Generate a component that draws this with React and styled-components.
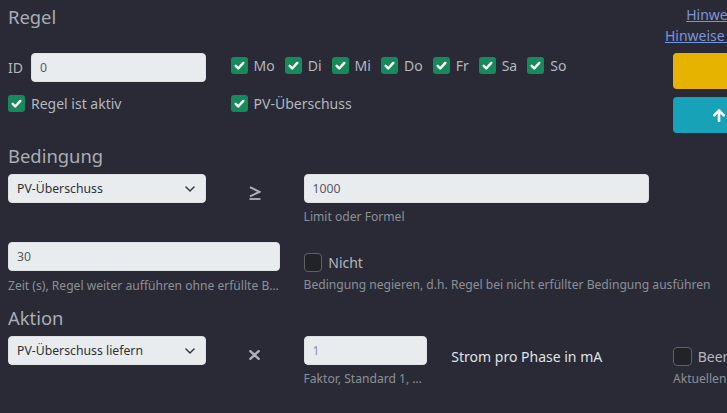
import React from "react";
import styled, { createGlobalStyle } from "styled-components";

const COL = 49.9;
const GAP = 24;
const span = (n) => n * COL + (n - 1) * GAP;

const Global = createGlobalStyle`
  html, body { margin: 0; padding: 0; background: #2a2a36; overflow: hidden; }
  body { font-family: "Noto Sans", "Open Sans", sans-serif; font-size: 14px; color: #b5b9c0; }
  * { box-sizing: border-box; }
`;

const Page = styled.div`
  width: ${span(12)}px;
  margin-left: 8px;
`;

const Grid = styled.div`
  display: grid;
  grid-template-columns: repeat(12, ${COL}px);
  column-gap: ${GAP}px;
  row-gap: ${(p) => p.$rowGap || 0}px;
  align-items: start;
  margin-top: ${(p) => p.$mt || 0}px;
`;

const Cell = styled.div`
  grid-column: span ${(p) => p.$span};
  min-width: 0;
  padding-top: ${(p) => p.$pt || 0}px;
`;

const Title = styled.h5`
  margin: ${(p) => p.$mt || 0}px 0 0;
  font-size: 18.4px;
  line-height: 22px;
  font-weight: 400;
  color: #a9adb5;
`;

const InnerGrid = styled.div`
  display: grid;
  grid-template-columns: 197.6px 1fr;
  column-gap: 25px;
  row-gap: 11px;
  margin-top: 25px;
  align-items: start;
`;

const IdGroup = styled.div`
  display: flex;
  align-items: center;
  gap: 8px;
`;

const Label = styled.span`
  font-family: "Noto Sans", "Open Sans", sans-serif;
  font-size: 14px;
  line-height: 21px;
  color: ${(p) => (p.$bright ? "#dfe2e6" : "#b3b7be")};
  white-space: nowrap;
`;

const Input = styled.input`
  flex: 1;
  min-width: 0;
  width: 100%;
  height: 29px;
  display: block;
  padding: 0 8px;
  background: #e9ecef;
  border: 1px solid #dde1e5;
  border-radius: 4px;
  font-family: inherit;
  font-size: 12.25px;
  color: #555b62;
  outline: none;
  &::placeholder { color: #8d9298; }
`;

const SelectWrap = styled.div`
  position: relative;
  height: 29px;
`;

const Select = styled.select`
  appearance: none;
  width: 100%;
  height: 29px;
  padding: 0 28px 0 8px;
  background: #e9ecef;
  border: 1px solid #dde1e5;
  border-radius: 4px;
  font-family: inherit;
  font-size: 12.25px;
  color: #2e3136;
  outline: none;
`;

const Chevron = styled.svg`
  position: absolute;
  right: 11px;
  top: 12px;
  pointer-events: none;
`;

const Days = styled.div`
  display: flex;
  align-items: center;
  gap: 10px;
  padding-top: 2px;
`;

const CheckItem = styled.label`
  display: flex;
  align-items: center;
  gap: 6px;
  margin-top: ${(p) => p.$mt || 0}px;
`;

const Box = styled.span`
  flex: none;
  display: inline-flex;
  width: ${(p) => p.$size}px;
  height: ${(p) => p.$size}px;
  border-radius: ${(p) => (p.$checked ? 3 : 4)}px;
  background: ${(p) => (p.$checked ? "#168a5b" : "#212329")};
  border: ${(p) => (p.$checked ? "none" : "1px solid #5d6169")};
`;

const Help = styled.div`
  margin-top: ${(p) => (p.$mt !== undefined ? p.$mt : 5.5)}px;
  font-size: 12.1px;
  line-height: 18.4px;
  color: #8b9097;
  white-space: nowrap;
  overflow: ${(p) => (p.$clip ? "hidden" : "visible")};
  text-overflow: ellipsis;
`;

const Op = styled.div`
  height: 29px;
  display: flex;
  justify-content: center;
  padding-top: ${(p) => p.$pt}px;
  color: #adb2ba;
`;

const Side = styled.div`
  display: flex;
  flex-direction: column;
  align-items: flex-end;
  margin: 4px 4px 0 0;
`;

const Link = styled.a`
  color: #7896da;
  text-decoration: underline;
  font-size: 14px;
  line-height: 21px;
  white-space: nowrap;
`;

const Buttons = styled.div`
  display: flex;
  flex-direction: column;
  gap: 8px;
  margin-top: 7px;
`;

const Button = styled.button`
  height: 36px;
  width: 100%;
  border: none;
  border-radius: 4px;
  background: ${(p) => p.$bg};
  color: ${(p) => p.$fg};
  font-family: inherit;
  font-size: 14px;
  display: flex;
  align-items: center;
  justify-content: center;
  gap: 6px;
`;

const Check = ({ checked, size = 17 }) => (
  <Box $checked={checked} $size={size}>
    {checked && (
      <svg viewBox="0 0 20 20" width="100%" height="100%">
        <path d="M5.5 10.5l3 3l6-6.5" fill="none" stroke="#fff" strokeWidth="2.9" strokeLinecap="round" strokeLinejoin="round" />
      </svg>
    )}
  </Box>
);

const Dropdown = ({ value }) => (
  <SelectWrap>
    <Select defaultValue={value}>
      <option>{value}</option>
    </Select>
    <Chevron width="10" height="6" viewBox="0 0 10 6">
      <path d="M1 1l4 4l4-4" fill="none" stroke="#343a40" strokeWidth="1.5" strokeLinecap="round" strokeLinejoin="round" />
    </Chevron>
  </SelectWrap>
);

const days = ["Mo", "Di", "Mi", "Do", "Fr", "Sa", "So"];

export default function App() {
  return (
    <Page>
      <Global />
      <Grid>
        <Cell $span={9}>
          <Title $mt={6}>Regel</Title>
          <InnerGrid>
            <IdGroup>
              <Label>ID</Label>
              <Input defaultValue="0" />
            </IdGroup>
            <Days>
              {days.map((d) => (
                <CheckItem key={d}>
                  <Check checked />
                  <Label>{d}</Label>
                </CheckItem>
              ))}
            </Days>
            <CheckItem>
              <Check checked />
              <Label>Regel ist aktiv</Label>
            </CheckItem>
            <CheckItem>
              <Check checked />
              <Label>PV-Überschuss</Label>
            </CheckItem>
          </InnerGrid>
        </Cell>
        <Cell $span={3}>
          <Side>
            <Link href="#">Hinweise zur Zeitsteuerung</Link>
            <Link href="#">Hinweise zur Regelausführung</Link>
          </Side>
          <Buttons>
            <Button $bg="#e6b400" $fg="#212529">Testen</Button>
            <Button $bg="#17a2b8" $fg="#ffffff">
              <svg width="12" height="13" viewBox="0 0 12 13">
                <path d="M6 1.5L1.2 6.3M6 1.5l4.8 4.8M6 1.8V12" fill="none" stroke="#fff" strokeWidth="2.6" strokeLinecap="round" strokeLinejoin="round" />
              </svg>
              Veröffentlichen
            </Button>
          </Buttons>
        </Cell>
      </Grid>

      <Title $mt={12}>Bedingung</Title>
      <Grid $mt={6.5} $rowGap={16}>
        <Cell $span={3}>
          <Dropdown value="PV-Überschuss" />
        </Cell>
        <Cell $span={1}>
          <Op $pt={12}>
            <svg width="12" height="14" viewBox="0 0 12 14">
              <path d="M1 1.2l9.5 4.6L1 10.4" fill="none" stroke="#adb2ba" strokeWidth="2" strokeLinejoin="miter" />
              <path d="M0.5 13h11" stroke="#adb2ba" strokeWidth="1.8" />
            </svg>
          </Op>
        </Cell>
        <Cell $span={5}>
          <Input defaultValue="1000" />
          <Help>Limit oder Formel</Help>
        </Cell>
        <Cell $span={3} />
        <Cell $span={4}>
          <Input defaultValue="30" />
          <Help $clip>Zeit (s), Regel weiter aufführen ohne erfüllte Bedingung</Help>
        </Cell>
        <Cell $span={8}>
          <CheckItem $mt={9.5}>
            <Check size={18.7} />
            <Label>Nicht</Label>
          </CheckItem>
          <Help $mt={3}>Bedingung negieren, d.h. Regel bei nicht erfüllter Bedingung ausführen</Help>
        </Cell>
      </Grid>

      <Title $mt={12}>Aktion</Title>
      <Grid $mt={6.5}>
        <Cell $span={3}>
          <Dropdown value="PV-Überschuss liefern" />
        </Cell>
        <Cell $span={1}>
          <Op $pt={14}>
            <svg width="11" height="10" viewBox="0 0 11 10">
              <path d="M1.3 1.2l8.4 7.6M9.7 1.2L1.3 8.8" stroke="#adb2ba" strokeWidth="2.4" strokeLinecap="round" />
            </svg>
          </Op>
        </Cell>
        <Cell $span={2}>
          <Input placeholder="1" />
          <Help $clip $mt={4.8}>Faktor, Standard 1, Multiplikator</Help>
        </Cell>
        <Cell $span={3} $pt={10}>
          <Label $bright>Strom pro Phase in mA</Label>
        </Cell>
        <Cell $span={3}>
          <CheckItem $mt={10.5}>
            <Check size={18.7} />
            <Label>Beenden</Label>
          </CheckItem>
          <Help $mt={3}>Aktuellen Wert beibehalten</Help>
        </Cell>
      </Grid>
    </Page>
  );
}
